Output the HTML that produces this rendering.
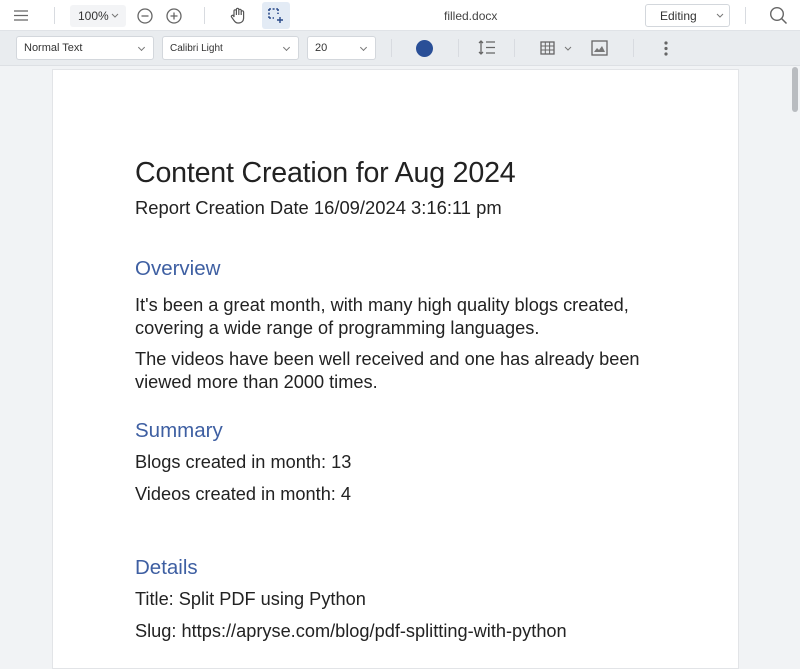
<!DOCTYPE html>
<html><head><style>
*{margin:0;padding:0;box-sizing:border-box}
body{width:800px;height:655px;overflow:hidden;background:#f1f3f5;font-family:"Liberation Sans",sans-serif;position:relative}
.tb1{position:absolute;left:0;top:0;width:800px;height:31px;background:#fff;border-bottom:1px solid #e0e3e7}
.tb2{position:absolute;left:0;top:31px;width:800px;height:35px;background:#e9ecef;border-bottom:1px solid #dde0e4}
.a{position:absolute}
.sel{position:absolute;top:36px;height:24px;background:#fff;border:1px solid #d3d7dc;border-radius:3px;font-size:11px;color:#333;padding:5px 7px}
.sel:after{content:"";position:absolute;right:9px;top:8px;width:4px;height:4px;border-right:1px solid #777;border-bottom:1px solid #777;transform:rotate(45deg)}
.sep{position:absolute;width:1px;background:#d8dbe0}
.page{position:absolute;left:52px;top:69px;width:687px;height:600px;background:#fff;border:1px solid #e2e4e7}
.t{position:absolute;left:135px;color:#222;white-space:nowrap;font-size:18.2px}
.h{color:#3e5fa2;font-size:20.5px}
</style></head><body>
<div class="tb1"></div>
<div class="tb2"></div>
<svg class="a" style="left:13px;top:9px" width="16" height="13"><path d="M1 2H15M1 6.5H15M1 11H15" stroke="#666" stroke-width="1.3"/></svg>
<div class="sep" style="left:54px;top:7px;height:17px"></div>
<div class="a" style="left:70px;top:5px;width:56px;height:22px;background:#f3f4f6;border-radius:3px"></div>
<div class="a" style="left:78px;top:9px;font-size:12px;color:#333">100%</div>
<svg class="a" style="left:111px;top:13px" width="8" height="6"><path d="M1 1L4 4L7 1" stroke="#777" fill="none"/></svg>
<svg class="a" style="left:136px;top:7px" width="18" height="18"><circle cx="9" cy="9" r="7" stroke="#666" fill="none" stroke-width="1.3"/><path d="M5.5 9H12.5" stroke="#666" stroke-width="1.3"/></svg>
<svg class="a" style="left:165px;top:7px" width="18" height="18"><circle cx="9" cy="9" r="7" stroke="#666" fill="none" stroke-width="1.3"/><path d="M5.5 9H12.5M9 5.5V12.5" stroke="#666" stroke-width="1.3"/></svg>
<div class="sep" style="left:204px;top:7px;height:17px"></div>
<svg class="a" style="left:229px;top:6px" width="18" height="19"><path d="M5 11V5a1.2 1.2 0 0 1 2.4 0V9V3.5a1.2 1.2 0 0 1 2.4 0V9V4.5a1.2 1.2 0 0 1 2.4 0V9V6a1.2 1.2 0 0 1 2.4 0v6c0 3-2 5-5 5H9c-2 0-3-1-4-2.5L2.5 11a1.2 1.2 0 0 1 2-1.3z" stroke="#555" fill="none" stroke-width="1.2"/></svg>
<div class="a" style="left:262px;top:2px;width:28px;height:27px;background:#e3ebf5;border-radius:3px"></div>
<svg class="a" style="left:267px;top:7px" width="18" height="18"><path d="M2 2H11M2 2V11M11 2V7M2 11H7" stroke="#2a4a8a" stroke-width="1.6" stroke-dasharray="2 1.6" fill="none"/><path d="M13 10V16M10 13H16" stroke="#2a4a8a" stroke-width="1.4"/></svg>
<div class="a" style="left:444px;top:9px;font-size:12px;color:#444">filled.docx</div>
<div class="a" style="left:645px;top:4px;width:85px;height:23px;border:1px solid #d3d7dc;border-radius:3px;background:#fff"></div>
<div class="a" style="left:660px;top:9px;font-size:12px;color:#333">Editing</div>
<svg class="a" style="left:716px;top:13px" width="8" height="6"><path d="M1 1L4 4L7 1" stroke="#777" fill="none"/></svg>
<div class="sep" style="left:745px;top:7px;height:17px"></div>
<svg class="a" style="left:769px;top:6px" width="19" height="19"><circle cx="8" cy="8" r="6.3" stroke="#666" fill="none" stroke-width="1.4"/><path d="M12.5 12.5L17.5 17.5" stroke="#666" stroke-width="1.5"/></svg>
<div class="sel" style="left:16px;width:138px">Normal Text</div>
<div class="sel" style="left:162px;width:137px;font-size:10px;padding-top:6px">Calibri Light</div>
<div class="sel" style="left:307px;width:69px">20</div>
<div class="sep" style="left:391px;top:39px;height:18px"></div>
<div class="a" style="left:416px;top:40px;width:17px;height:17px;border-radius:50%;background:#2a4f97"></div>
<div class="sep" style="left:458px;top:39px;height:18px"></div>
<svg class="a" style="left:478px;top:40px" width="18" height="15"><path d="M3 1V14M1 3L3 1L5 3M1 12L3 14L5 12M8 2H17M8 7.5H17M8 13H17" stroke="#666" stroke-width="1.3" fill="none"/></svg>
<div class="sep" style="left:514px;top:39px;height:18px"></div>
<svg class="a" style="left:540px;top:41px" width="15" height="14"><rect x="1" y="1" width="13" height="12" stroke="#666" fill="none" stroke-width="1.3"/><path d="M1 5H14M1 9H14M5.3 1V13M9.6 1V13" stroke="#666"/></svg>
<svg class="a" style="left:564px;top:46px" width="8" height="6"><path d="M1 1L4 4L7 1" stroke="#777" fill="none"/></svg>
<svg class="a" style="left:591px;top:40px" width="17" height="16"><rect x="1" y="1" width="15" height="14" stroke="#666" fill="none" stroke-width="1.3"/><path d="M3 12L6 8L8 10L11 6L14 12Z" fill="#777"/></svg>
<div class="sep" style="left:633px;top:39px;height:18px"></div>
<svg class="a" style="left:663px;top:40px" width="6" height="17"><circle cx="3" cy="3" r="1.6" fill="#666"/><circle cx="3" cy="8.5" r="1.6" fill="#666"/><circle cx="3" cy="14" r="1.6" fill="#666"/></svg>
<div class="a" style="left:792px;top:67px;width:6px;height:45px;background:#b9bcc0;border-radius:3px"></div>
<div class="page"></div>
<div class="t" style="top:157px;font-size:28.6px;letter-spacing:-0.2px">Content Creation for Aug 2024</div>
<div class="t" style="top:197px;font-size:18.4px">Report Creation Date 16/09/2024 3:16:11 pm</div>
<div class="t h" style="top:257px">Overview</div>
<div class="t" style="top:295px">It's been a great month, with many high quality blogs created,</div>
<div class="t" style="top:318px">covering a wide range of programming languages.</div>
<div class="t" style="top:349px">The videos have been well received and one has already been</div>
<div class="t" style="top:372px">viewed more than 2000 times.</div>
<div class="t h" style="top:419px">Summary</div>
<div class="t" style="top:452px">Blogs created in month: 13</div>
<div class="t" style="top:484px">Videos created in month: 4</div>
<div class="t h" style="top:556px">Details</div>
<div class="t" style="top:589px">Title: Split PDF using Python</div>
<div class="t" style="top:621px">Slug: https://apryse.com/blog/pdf-splitting-with-python</div>
</body></html>
